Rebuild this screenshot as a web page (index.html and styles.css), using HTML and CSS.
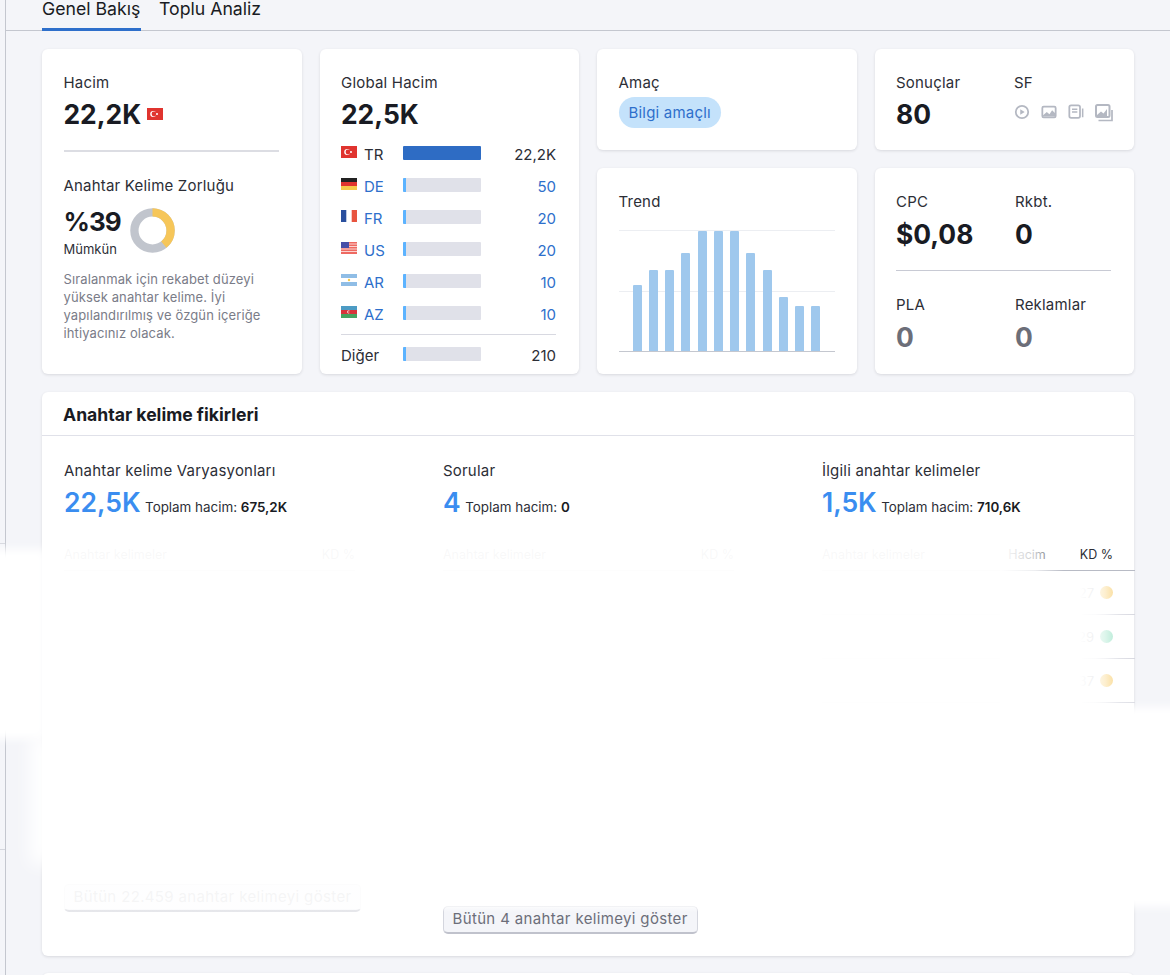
FILE: index.html
```html
<!DOCTYPE html>
<html lang="tr">
<head>
<meta charset="utf-8">
<title>Genel Bakış</title>
<link rel="stylesheet" href="styles.css">
</head>
<body>
<div class="app">
  <aside class="rail"><div class="rail-seg rail-seg-top"></div><div class="rail-seg rail-seg-mid"></div></aside>
  <main class="main">
    <nav class="tabs">
      <span class="tab tab-active">Genel Bakış</span>
      <span class="tab">Toplu Analiz</span>
    </nav>
    <section class="grid">
      <article class="card card-volume">
        <div class="label">Hacim</div>
        <div class="value-row">
          <span class="value">22,2K</span>
          <svg class="flag flag-lg" viewBox="0 0 16 12"><rect width="16" height="12" fill="#e0342f"/><circle cx="6.2" cy="6" r="3" fill="#fff"/><circle cx="7" cy="6" r="2.4" fill="#e0342f"/><circle cx="10" cy="6" r="1" fill="#fff"/></svg>
        </div>
        <hr class="rule rule-volume">
        <div class="label">Anahtar Kelime Zorluğu</div>
        <div class="kd">
          <div>
            <div class="value">%39</div>
            <div class="kd-state">Mümkün</div>
          </div>
          <svg class="donut" viewBox="0 0 46 46"><circle cx="23" cy="23" r="18.5" fill="none" stroke="#c1c5cd" stroke-width="8.5"/><circle cx="23" cy="23" r="18.5" fill="none" stroke="#f6c659" stroke-width="8.5" stroke-dasharray="45.3 116.2" transform="rotate(-90 23 23)"/></svg>
        </div>
        <p class="note">Sıralanmak için rekabet düzeyi yüksek anahtar kelime. İyi yapılandırılmış ve özgün içeriğe ihtiyacınız olacak.</p>
      </article>

      <article class="card card-global">
        <div class="label">Global Hacim</div>
        <div class="value global-value">22,5K</div>
        <div class="countries">
          <div class="country">
            <svg class="flag" viewBox="0 0 16 12"><rect width="16" height="12" fill="#e0342f"/><circle cx="6.2" cy="6" r="3" fill="#fff"/><circle cx="7" cy="6" r="2.4" fill="#e0342f"/><circle cx="10" cy="6" r="1" fill="#fff"/></svg>
            <span class="code code-plain">TR</span>
            <span class="bar"><span class="bar-fill bar-full"></span></span>
            <span class="num num-plain">22,2K</span>
          </div>
          <div class="country">
            <svg class="flag" viewBox="0 0 16 12"><rect width="16" height="4" fill="#222"/><rect y="4" width="16" height="4" fill="#e0342f"/><rect y="8" width="16" height="4" fill="#f6c94a"/></svg>
            <span class="code">DE</span>
            <span class="bar"><span class="bar-fill"></span></span>
            <span class="num">50</span>
          </div>
          <div class="country">
            <svg class="flag" viewBox="0 0 16 12"><rect width="16" height="12" fill="#fff"/><rect width="5.3" height="12" fill="#2a4f9e"/><rect x="10.7" width="5.3" height="12" fill="#e8543f"/></svg>
            <span class="code">FR</span>
            <span class="bar"><span class="bar-fill"></span></span>
            <span class="num">20</span>
          </div>
          <div class="country">
            <svg class="flag" viewBox="0 0 16 12"><rect width="16" height="12" fill="#ee6a62"/><path d="M0 2h16M0 4.5h16M0 7h16M0 9.5h16" stroke="#fbd5d2" stroke-width="1"/><rect width="8" height="6" fill="#474fa8"/></svg>
            <span class="code">US</span>
            <span class="bar"><span class="bar-fill"></span></span>
            <span class="num">20</span>
          </div>
          <div class="country">
            <svg class="flag" viewBox="0 0 16 12"><rect width="16" height="12" fill="#fff"/><rect width="16" height="4" fill="#8fbde6"/><rect y="8" width="16" height="4" fill="#8fbde6"/><circle cx="8" cy="6" r="1.2" fill="#f6c94a"/></svg>
            <span class="code">AR</span>
            <span class="bar"><span class="bar-fill"></span></span>
            <span class="num">10</span>
          </div>
          <div class="country">
            <svg class="flag" viewBox="0 0 16 12"><rect width="16" height="4" fill="#4c9bc4"/><rect y="4" width="16" height="4" fill="#d8343a"/><rect y="8" width="16" height="4" fill="#46a35f"/><circle cx="7.6" cy="6" r="1.4" fill="#fff"/><circle cx="8.1" cy="6" r="1.1" fill="#d8343a"/></svg>
            <span class="code">AZ</span>
            <span class="bar"><span class="bar-fill"></span></span>
            <span class="num">10</span>
          </div>
          <div class="country country-other">
            <span class="other-name">Diğer</span>
            <span class="bar"><span class="bar-fill"></span></span>
            <span class="num num-plain">210</span>
          </div>
        </div>
      </article>

      <article class="card card-intent">
        <div class="label">Amaç</div>
        <span class="pill">Bilgi amaçlı</span>
      </article>

      <article class="card card-results">
        <div class="pair">
          <div>
            <div class="label">Sonuçlar</div>
            <div class="value">80</div>
          </div>
          <div>
            <div class="label">SF</div>
            <div class="sf-icons">
              <svg class="sf" viewBox="0 0 18 18"><circle cx="9" cy="9" r="7" fill="none" stroke="#b4b8c2" stroke-width="2"/><path d="M7 5.8v6.4l5-3.2z" fill="#b4b8c2"/></svg>
              <svg class="sf" viewBox="0 0 18 18"><rect x="1.5" y="3" width="15" height="12" rx="1.5" fill="none" stroke="#b4b8c2" stroke-width="2"/><path d="M2 13l4.5-4 3 2.5 3-4.5 3.5 3.5V14H2z" fill="#b4b8c2"/></svg>
              <svg class="sf" viewBox="0 0 18 18"><rect x="1.5" y="1.5" width="12" height="14" rx="2" fill="none" stroke="#b4b8c2" stroke-width="2"/><path d="M4.5 6h6M4.5 9h6M16.5 5v10" stroke="#b4b8c2" stroke-width="1.7"/></svg>
              <svg class="sf" viewBox="0 0 18 18"><rect x="1" y="1" width="13.5" height="12" rx="1.5" fill="none" stroke="#b4b8c2" stroke-width="2"/><path d="M2 11l4-3.5 2.5 2L12 5v7H2z" fill="#b4b8c2"/><path d="M3.5 16.5h13.5V6" fill="none" stroke="#b4b8c2" stroke-width="1.7"/></svg>
            </div>
          </div>
        </div>
      </article>

      <article class="card card-trend">
        <div class="label">Trend</div>
        <div class="chart">
          <span class="gridline gridline-mid"></span>
          <span class="trend-bar" style="height:55.4%"></span>
          <span class="trend-bar" style="height:67.2%"></span>
          <span class="trend-bar" style="height:67.2%"></span>
          <span class="trend-bar" style="height:82%"></span>
          <span class="trend-bar" style="height:100%"></span>
          <span class="trend-bar" style="height:100%"></span>
          <span class="trend-bar" style="height:100%"></span>
          <span class="trend-bar" style="height:82%"></span>
          <span class="trend-bar" style="height:67.2%"></span>
          <span class="trend-bar" style="height:45%"></span>
          <span class="trend-bar" style="height:37.2%"></span>
          <span class="trend-bar" style="height:37.2%"></span>
        </div>
      </article>

      <article class="card card-cpc">
        <div class="pair pair-cpc">
          <div>
            <div class="label">CPC</div>
            <div class="value">$0,08</div>
          </div>
          <div>
            <div class="label">Rkbt.</div>
            <div class="value">0</div>
          </div>
        </div>
        <hr class="rule rule-cpc">
        <div class="pair pair-cpc">
          <div>
            <div class="label">PLA</div>
            <div class="value value-muted">0</div>
          </div>
          <div>
            <div class="label">Reklamlar</div>
            <div class="value value-muted">0</div>
          </div>
        </div>
      </article>
    </section>

    <section class="panel">
      <h2 class="panel-title">Anahtar kelime fikirleri</h2>
      <div class="ideas">
        <div class="idea">
          <div class="label">Anahtar kelime Varyasyonları</div>
          <div class="stat"><span class="stat-num">22,5K</span><span class="stat-note">Toplam hacim: <b>675,2K</b></span></div>
          <div class="thead"><span class="th-name">Anahtar kelimeler</span><span>KD %</span></div>
          <div class="tbody tbody-first"></div>
          <span class="btn">Bütün 22.459 anahtar kelimeyi göster</span>
        </div>
        <div class="idea">
          <div class="label">Sorular</div>
          <div class="stat"><span class="stat-num">4</span><span class="stat-note">Toplam hacim: <b>0</b></span></div>
          <div class="thead"><span class="th-name">Anahtar kelimeler</span><span>KD %</span></div>
          <div class="tbody tbody-second"></div>
          <span class="btn btn-short">Bütün 4 anahtar kelimeyi göster</span>
        </div>
        <div class="idea idea-last">
          <div class="label">İlgili anahtar kelimeler</div>
          <div class="stat"><span class="stat-num">1,5K</span><span class="stat-note">Toplam hacim: <b>710,6K</b></span></div>
          <div class="thead thead-last"><span class="th-name">Anahtar kelimeler</span><span class="th-vol">Hacim</span><span class="th-kd">KD %</span></div>
          <div class="row"><span>27</span><i class="dot dot-yellow"></i></div>
          <div class="row"><span>29</span><i class="dot dot-green"></i></div>
          <div class="row"><span>37</span><i class="dot dot-yellow"></i></div>
        </div>
      </div>
    </section>
    <div class="next-card"></div>
  </main>
</div>
<div class="mask mask-main"></div>
<div class="mask mask-left-top"></div>
<div class="mask mask-left-low"></div>
<div class="mask mask-right"></div>
<div class="mask mask-rows"></div>
<div class="mask mask-head"></div>
<div class="mask mask-btn-first"></div>
<div class="mask mask-btn-second"></div>
</body>
</html>
```
FILE: styles.css
```css
* { box-sizing: border-box; }
html, body { margin: 0; height: 975px; overflow: hidden; background: #f4f5f9; }
body { font-family: Inter, "Liberation Sans", sans-serif; color: #191b23; position: relative; }
.app { display: flex; height: 975px; overflow: hidden; }
.rail { width: 6px; flex: none; border-right: 1px solid #c4c7cf; }
.rail-seg { border-bottom: 1px solid #d4d6dd; }
.rail-seg-top { height: 544px; }
.rail-seg-mid { height: 306px; }
.main { flex: 1; min-width: 0; display: flex; flex-direction: column; }

.tabs { height: 31px; flex: none; display: flex; gap: 18px; padding-left: 36px; border-bottom: 1px solid #c4c7cf; }
.tab { height: 31px; font-size: 17.7px; line-height: 18px; color: #191b23; white-space: nowrap; }
.tab-active { width: 99px; border-bottom: 3px solid #2e6fcb; }

.grid { margin: 18px 0 0 36px; width: 1092px; display: grid; grid-template-columns: repeat(4, 1fr); grid-template-rows: 101px 206px; gap: 18px; flex: none; }
.card { background: #fff; border-radius: 6px; box-shadow: 0 1px 3px rgba(25, 27, 35, .12); padding: 25px 23px 0 21.5px; min-width: 0; }
.card-volume { grid-column: 1; grid-row: 1 / 3; }
.card-global { grid-column: 2; grid-row: 1 / 3; }
.card-intent { grid-column: 3; grid-row: 1; }
.card-results { grid-column: 4; grid-row: 1; }
.card-trend { grid-column: 3; grid-row: 2; padding-right: 22px; }
.card-cpc { grid-column: 4; grid-row: 2; }

.label { font-size: 15px; line-height: 18px; color: #2c2e36; letter-spacing: .2px; white-space: nowrap; }
.value { font-size: 26.4px; line-height: 32px; font-weight: 700; color: #191b23; margin-top: 6px; white-space: nowrap; }
.value-muted { color: #6c6e79; }
.value-row { display: flex; align-items: center; gap: 6px; }
.flag { width: 16px; height: 12px; flex: none; display: block; }
.flag-lg { margin-top: 5px; }
.rule { border: 0; height: 1px; background: #dcdde3; margin: 0; }
.rule-volume { margin: 20px 0 25px; height: 2px; }
.rule-cpc { margin: 20px 0 25px; background: #c8cad4; }
.pair-cpc .value { margin-top: 7px; }

.kd { display: flex; align-items: flex-start; gap: 9px; margin-top: 9px; }
.kd .value { font-size: 26px; line-height: 33px; margin-top: 1px; letter-spacing: -1px; }
.kd-state { font-size: 13px; line-height: 14px; color: #2c2e36; margin-top: 4px; }
.donut { width: 45px; height: 45px; margin-top: 4px; }
.note { margin: 14px 0 0; font-size: 13px; line-height: 18px; letter-spacing: .12px; color: #7a7c88; }

.countries { margin-top: 16px; }
.country { display: flex; align-items: flex-start; height: 32px; font-size: 15px; line-height: 18px; }
.code { width: 46px; padding-left: 7px; color: #2e6fcb; flex: none; }
.code-plain { color: #2c2e36; }
.bar { width: 78px; height: 14px; background: #e0e1e9; border-radius: 1px; flex: none; display: block; overflow: hidden; }
.bar-fill { display: block; width: 3px; height: 100%; background: #5cb3ff; }
.bar-full { width: 100%; background: #2e6cc4; }
.num { flex: 1; text-align: right; color: #2e6fcb; }
.num-plain { color: #2c2e36; }
.country-other { margin-top: -4px; padding-top: 9px; border-top: 1px solid #d8d9e1; }
.country-other .bar { margin-top: 3px; }
.country-other .num { margin-top: 3px; }
.other-name { width: 62px; flex: none; color: #2c2e36; margin-top: 3px; }

.pill { display: inline-block; height: 31px; line-height: 31px; padding: 0 10px; border-radius: 16px; background: #c4e2fb; color: #2e6fcb; font-size: 15px; letter-spacing: .2px; margin-top: 5px; }

.pair { display: grid; grid-template-columns: 118px 1fr; }
.sf-icons { display: flex; gap: 11px; margin-top: 12px; }
.sf { width: 16px; height: 16px; display: block; }
.sf-icons .sf:last-child { width: 18px; height: 18px; }

.chart { position: relative; margin-top: 19px; height: 122px; display: flex; align-items: flex-end; justify-content: space-between; padding: 0 14px; border-top: 1px solid #eceef2; border-bottom: 1px solid #c4c7cf; }
.gridline { position: absolute; left: 0; right: 0; }
.gridline-mid { top: 60px; height: 1px; background: #eceef2; }
.trend-bar { position: relative; width: 9px; background: #9fc8ed; border-radius: 1px 1px 0 0; }

.card-cpc .pair-cpc { grid-template-columns: 119px 1fr; }

.panel { margin: 18px 0 0 36px; width: 1092px; height: 564px; flex: none; background: #fff; border-radius: 6px; box-shadow: 0 1px 3px rgba(25, 27, 35, .12); }
.panel-title { margin: 0; height: 44px; padding: 0 21px; border-bottom: 1px solid #e0e1e9; font-size: 17.6px; line-height: 46px; font-weight: 700; color: #191b23; }
.ideas { display: grid; grid-template-columns: repeat(3, 291px); column-gap: 88px; padding: 26px 22px 0; }
.idea { display: flex; flex-direction: column; align-items: flex-start; min-width: 0; }
.stat { display: flex; align-items: baseline; margin-top: 4px; height: 36px; white-space: nowrap; }
.stat-num { font-size: 26.5px; line-height: 36px; font-weight: 600; color: #3a8df0; margin-right: 4.5px; }
.stat-note { font-size: 13.4px; color: #2c2e36; }
.stat-note b { font-weight: 600; color: #191b23; }
.thead { align-self: stretch; display: flex; justify-content: space-between; height: 33px; margin-top: 18px; padding-top: 9px; font-size: 12.5px; line-height: 16px; color: #2c2e36; border-bottom: 1px solid #b8bbc5; }
.thead-last { margin-right: -22px; padding-right: 22px; }
.th-name { flex: 1; }
.th-vol { margin-right: 34px; }
.tbody { align-self: stretch; }
.tbody-first { height: 313px; }
.tbody-second { height: 335px; }
.row { align-self: stretch; margin-right: -22px; padding-right: 22px; height: 44px; display: flex; align-items: center; justify-content: flex-end; gap: 6px; font-size: 13px; color: #6c6e79; border-bottom: 1px solid #d8d9e1; }
.dot { width: 13px; height: 13px; border-radius: 50%; display: block; }
.dot-yellow { background: #f8c95f; }
.dot-green { background: #8ee0bf; }
.btn { display: block; height: 28px; line-height: 24px; width: 297px; padding: 0 8.5px; border-radius: 5px; background: #f4f5f9; border: 1px solid #d4d6de; border-bottom: 2px solid #c0c2cc; color: #6c6e79; font-size: 15px; letter-spacing: .35px; overflow: hidden; white-space: nowrap; }
.btn-short { width: 255px; }
.next-card { margin: 17px 0 0 36px; width: 1092px; height: 20px; flex: none; background: #fff; border-radius: 6px; box-shadow: 0 1px 3px rgba(25, 27, 35, .12); }

.mask { position: absolute; pointer-events: none; }
.mask-main { left: 42px; top: 545px; width: 958px; height: 335px; background: rgba(255, 255, 255, .97); }
.mask-left-top { left: -14px; top: 549px; width: 60px; height: 190px; background: #fff; filter: blur(5px); }
.mask-left-low { left: 30px; top: 735px; width: 28px; height: 130px; background: #fff; filter: blur(9px); }
.mask-right { left: 1030px; top: 707px; width: 170px; height: 200px; background: #fff; filter: blur(4px); }
.mask-rows { left: 1000px; top: 571px; width: 134px; height: 132px; background: linear-gradient(90deg, #fff 60%, rgba(255,255,255,.94) 65%, rgba(255,255,255,.9) 71%, rgba(255,255,255,.7) 78.5%, rgba(255,255,255,.25) 89%, rgba(255,255,255,0)); }
.mask-head { left: 1000px; top: 545px; width: 64px; height: 27px; background: linear-gradient(90deg, #fff, rgba(255,255,255,.75) 55%, rgba(255,255,255,0)); }
.mask-btn-first { left: 42px; top: 878px; width: 340px; height: 36px; background: linear-gradient(180deg, rgba(255,255,255,.93) 85%, rgba(255,255,255,.6) 86%); }
.mask-btn-second { left: 430px; top: 880px; width: 290px; height: 32px; background: linear-gradient(180deg, #fff 75%, rgba(255,255,255,0)); }
```
